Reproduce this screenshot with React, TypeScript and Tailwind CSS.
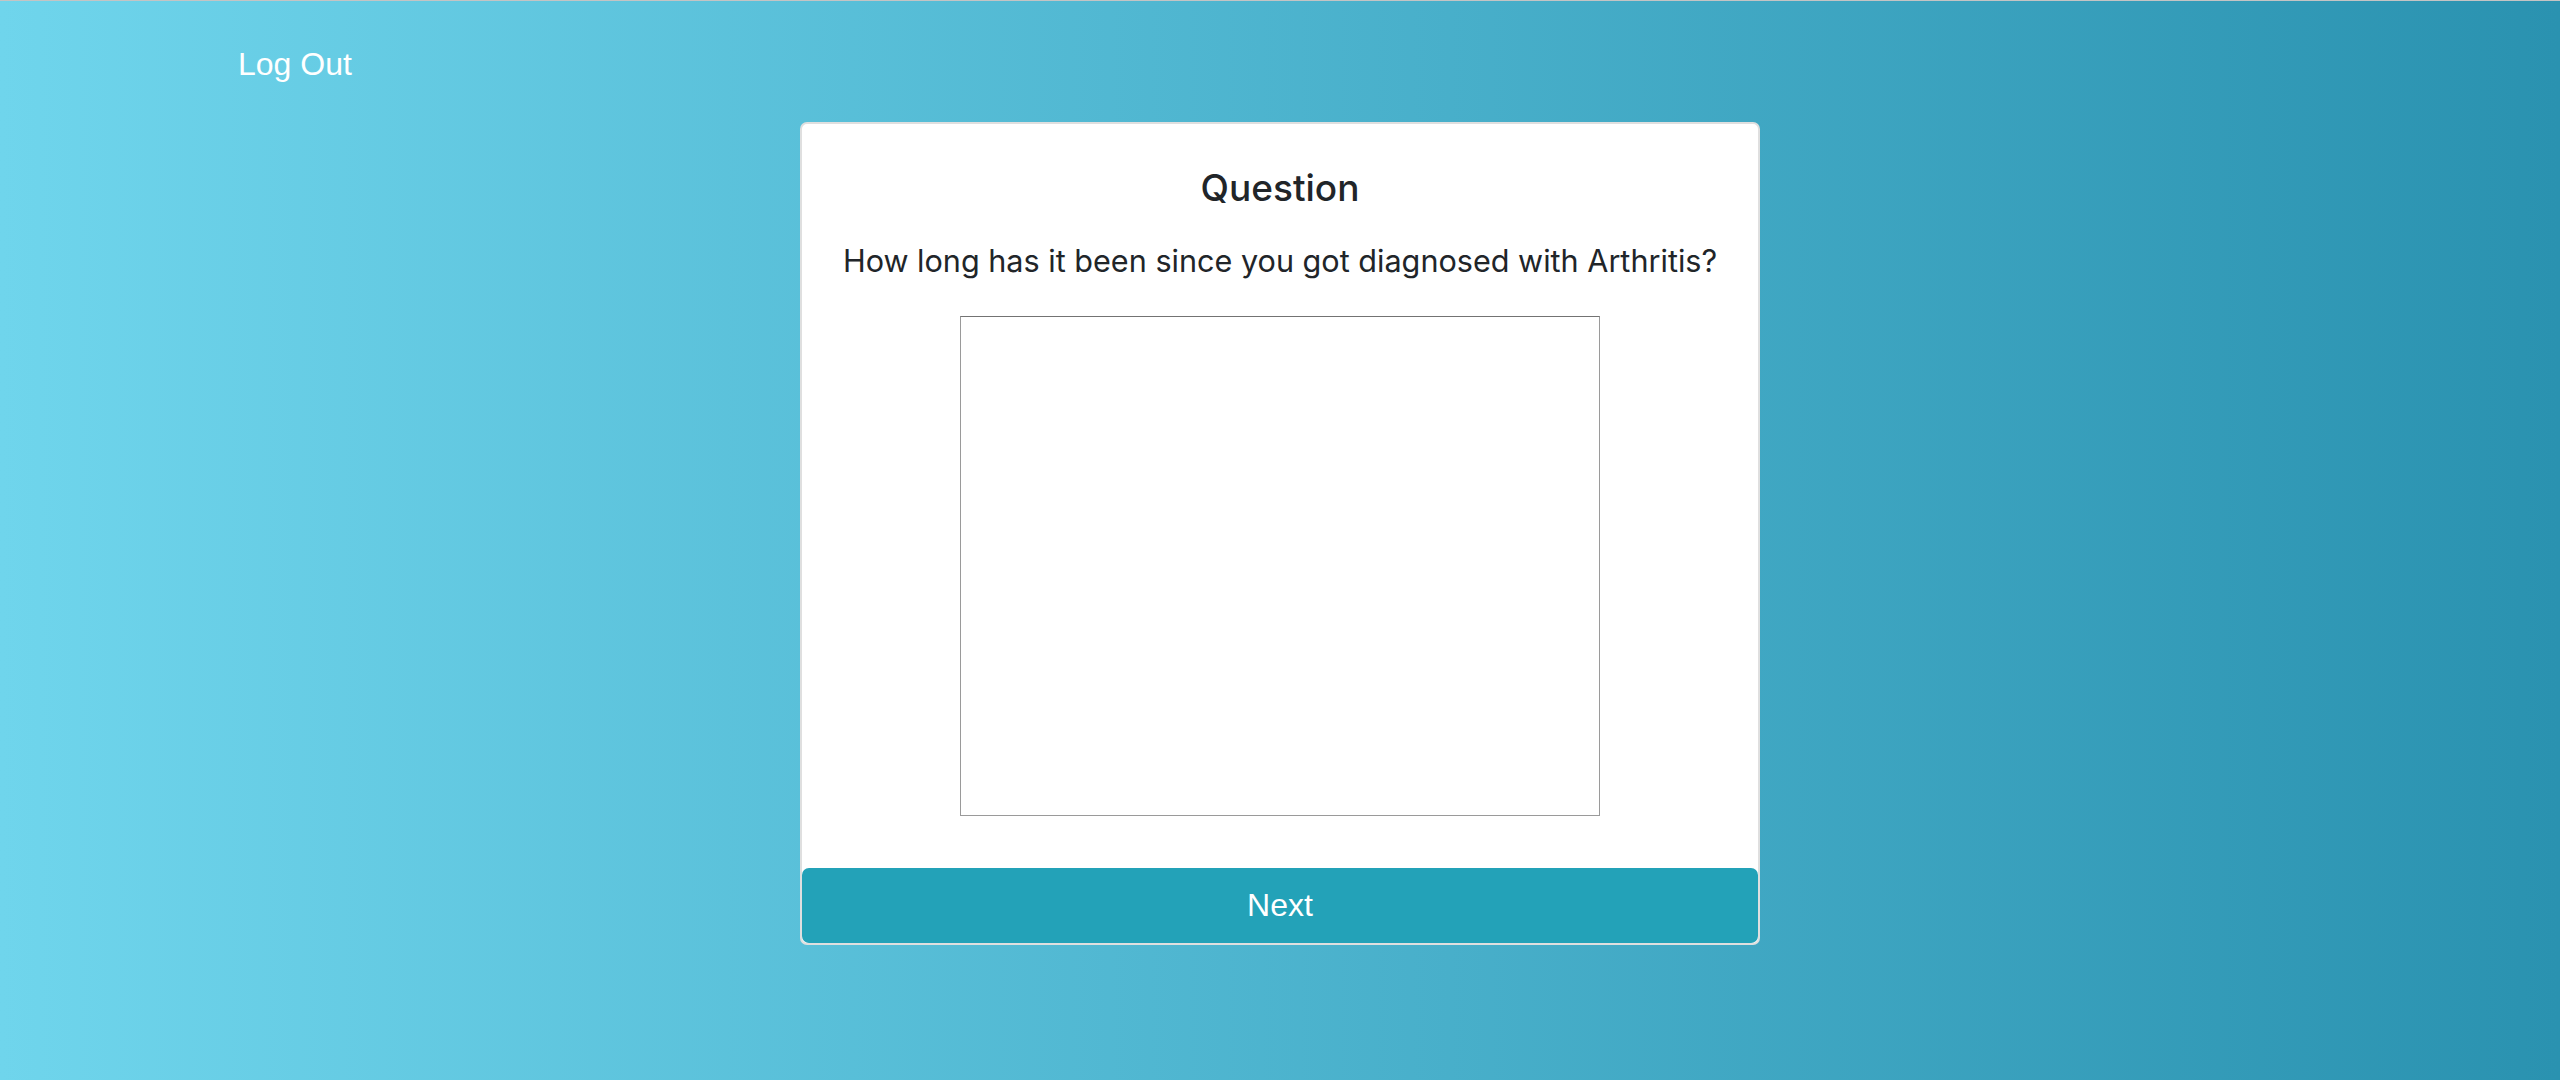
export default function App() {
	return (
		<div
			className="min-h-[1080px] w-full border-t border-[#c4c4c4] bg-[linear-gradient(to_right,#6fd5ec,#2a92b0)] text-[#212529]"
			style={{ fontFamily: '"Liberation Sans", Arial, sans-serif' }}
		>
			<nav className="px-[238px] pt-[47px]">
				<a href="#" className="block w-max text-[32px] leading-none text-white">
					Log Out
				</a>
			</nav>

			<div className="mx-auto mt-[42px] flex w-[960px] flex-col items-center overflow-hidden rounded-[7px] border-2 border-[#dfdfdf] bg-white">
				<h2 className="pt-[45px] font-['Inter',sans-serif] text-[37px] font-medium leading-none">
					Question
				</h2>
				<p className="mt-[40px] font-['Inter',sans-serif] text-[30.6px] leading-none">
					How long has it been since you got diagnosed with Arthritis?
				</p>
				<textarea
					className="mt-[39px] h-[500px] w-[640px] resize-none border border-[#9a9a9a] border-t-[#737373] bg-white outline-none"
					aria-label="Answer"
				/>
				<button
					type="button"
					className="mt-[52px] flex h-[75px] w-full items-center justify-center rounded-[7px] bg-[#23a2b8] text-[32px] leading-none text-white"
				>
					Next
				</button>
			</div>
		</div>
	)
}
